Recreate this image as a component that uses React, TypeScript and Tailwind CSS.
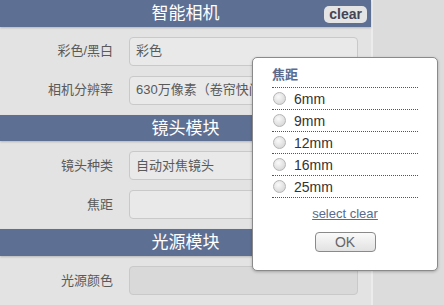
import React from 'react';

const font = { fontFamily: '"Liberation Sans", "Noto Sans CJK SC", sans-serif' };

const options = ['6mm', '9mm', '12mm', '16mm', '25mm'];

const SectionHeader: React.FC<{ title: string; clear?: boolean }> = ({ title, clear }) => (
  <div className="relative h-[27px] bg-[#5e6f94] flex items-center justify-center shadow-[0_1px_2px_rgba(0,0,0,0.2)]">
    <span className="text-[17px] text-white leading-none">{title}</span>
    {clear && (
      <span className="absolute right-[4px] top-[6px] px-[5px] h-[17px] leading-[17px] rounded-[5px] bg-[#e4e4e4] text-[#445] text-[14px] font-bold">
        clear
      </span>
    )}
  </div>
);

const Field: React.FC<{ label: string; value?: string; dim?: boolean }> = ({ label, value, dim }) => (
  <div className="flex items-center">
    <div className="w-[113px] text-right text-[13px] text-[#5a5a5a]">{label}</div>
    <div
      className={`ml-[16px] w-[229px] h-[29px] rounded-[4px] border border-[#c9c9c9] flex items-center px-[6px] text-[13px] text-[#5a5a5a] whitespace-nowrap overflow-hidden ${
        dim ? 'bg-[#d9d9d9]' : 'bg-[#e9e9e9]'
      }`}
    >
      {value}
    </div>
  </div>
);

export default function App() {
  return (
    <div className="relative w-[444px] h-[305px] overflow-hidden bg-[#e3e3e3] flex" style={font}>
      {/* Main form */}
      <div className="w-[371px] flex flex-col">
        <SectionHeader title="智能相机" clear />
        <div className="flex flex-col gap-[10px] pt-[10px] pb-[10px]">
          <Field label="彩色/黑白" value="彩色" />
          <Field label="相机分辨率" value="630万像素（卷帘快门）" />
        </div>
        <SectionHeader title="镜头模块" />
        <div className="flex flex-col gap-[10px] pt-[10px] pb-[10px]">
          <Field label="镜头种类" value="自动对焦镜头" />
          <Field label="焦距" />
        </div>
        <SectionHeader title="光源模块" />
        <div className="flex flex-col gap-[10px] pt-[10px] pb-[10px]">
          <Field label="光源颜色" dim />
        </div>
      </div>
      {/* Right strip */}
      <div className="flex-1 border-l-2 border-[#ececec] bg-[#dcdcdc]" />

      {/* Popup */}
      <div className="absolute left-[252px] top-[57px] w-[186px] h-[214px] bg-white border border-[#8a8a8a] rounded-[5px] shadow-[0_1px_3px_rgba(0,0,0,0.25)] pt-[8px] px-[19px]">
        <div className="text-[13px] font-bold text-[#5a6b8e] leading-[18px] pb-[3px] border-b border-dotted border-[#555]">
          焦距
        </div>
        {options.map((o) => (
          <div
            key={o}
            className="flex items-center h-[22px] border-b border-dotted border-[#555]"
          >
            <span className="ml-[1px] w-[13px] h-[13px] rounded-full border border-[#b5b5b5] bg-[radial-gradient(circle_at_40%_35%,#fafafa,#cfcfcf)]" />
            <span className="ml-[8px] text-[14px] text-[#333] leading-none">{o}</span>
          </div>
        ))}
        <div className="text-center mt-[8px] text-[13px] text-[#5a6b8e] underline leading-[16px]">
          select clear
        </div>
        <div className="flex justify-center mt-[10px]">
          <div className="w-[61px] h-[20px] rounded-[4px] border border-[#8a8a8a] bg-gradient-to-b from-[#fafafa] to-[#e2e2e2] text-[14px] text-[#666] flex items-center justify-center leading-none">
            OK
          </div>
        </div>
      </div>
    </div>
  );
}
